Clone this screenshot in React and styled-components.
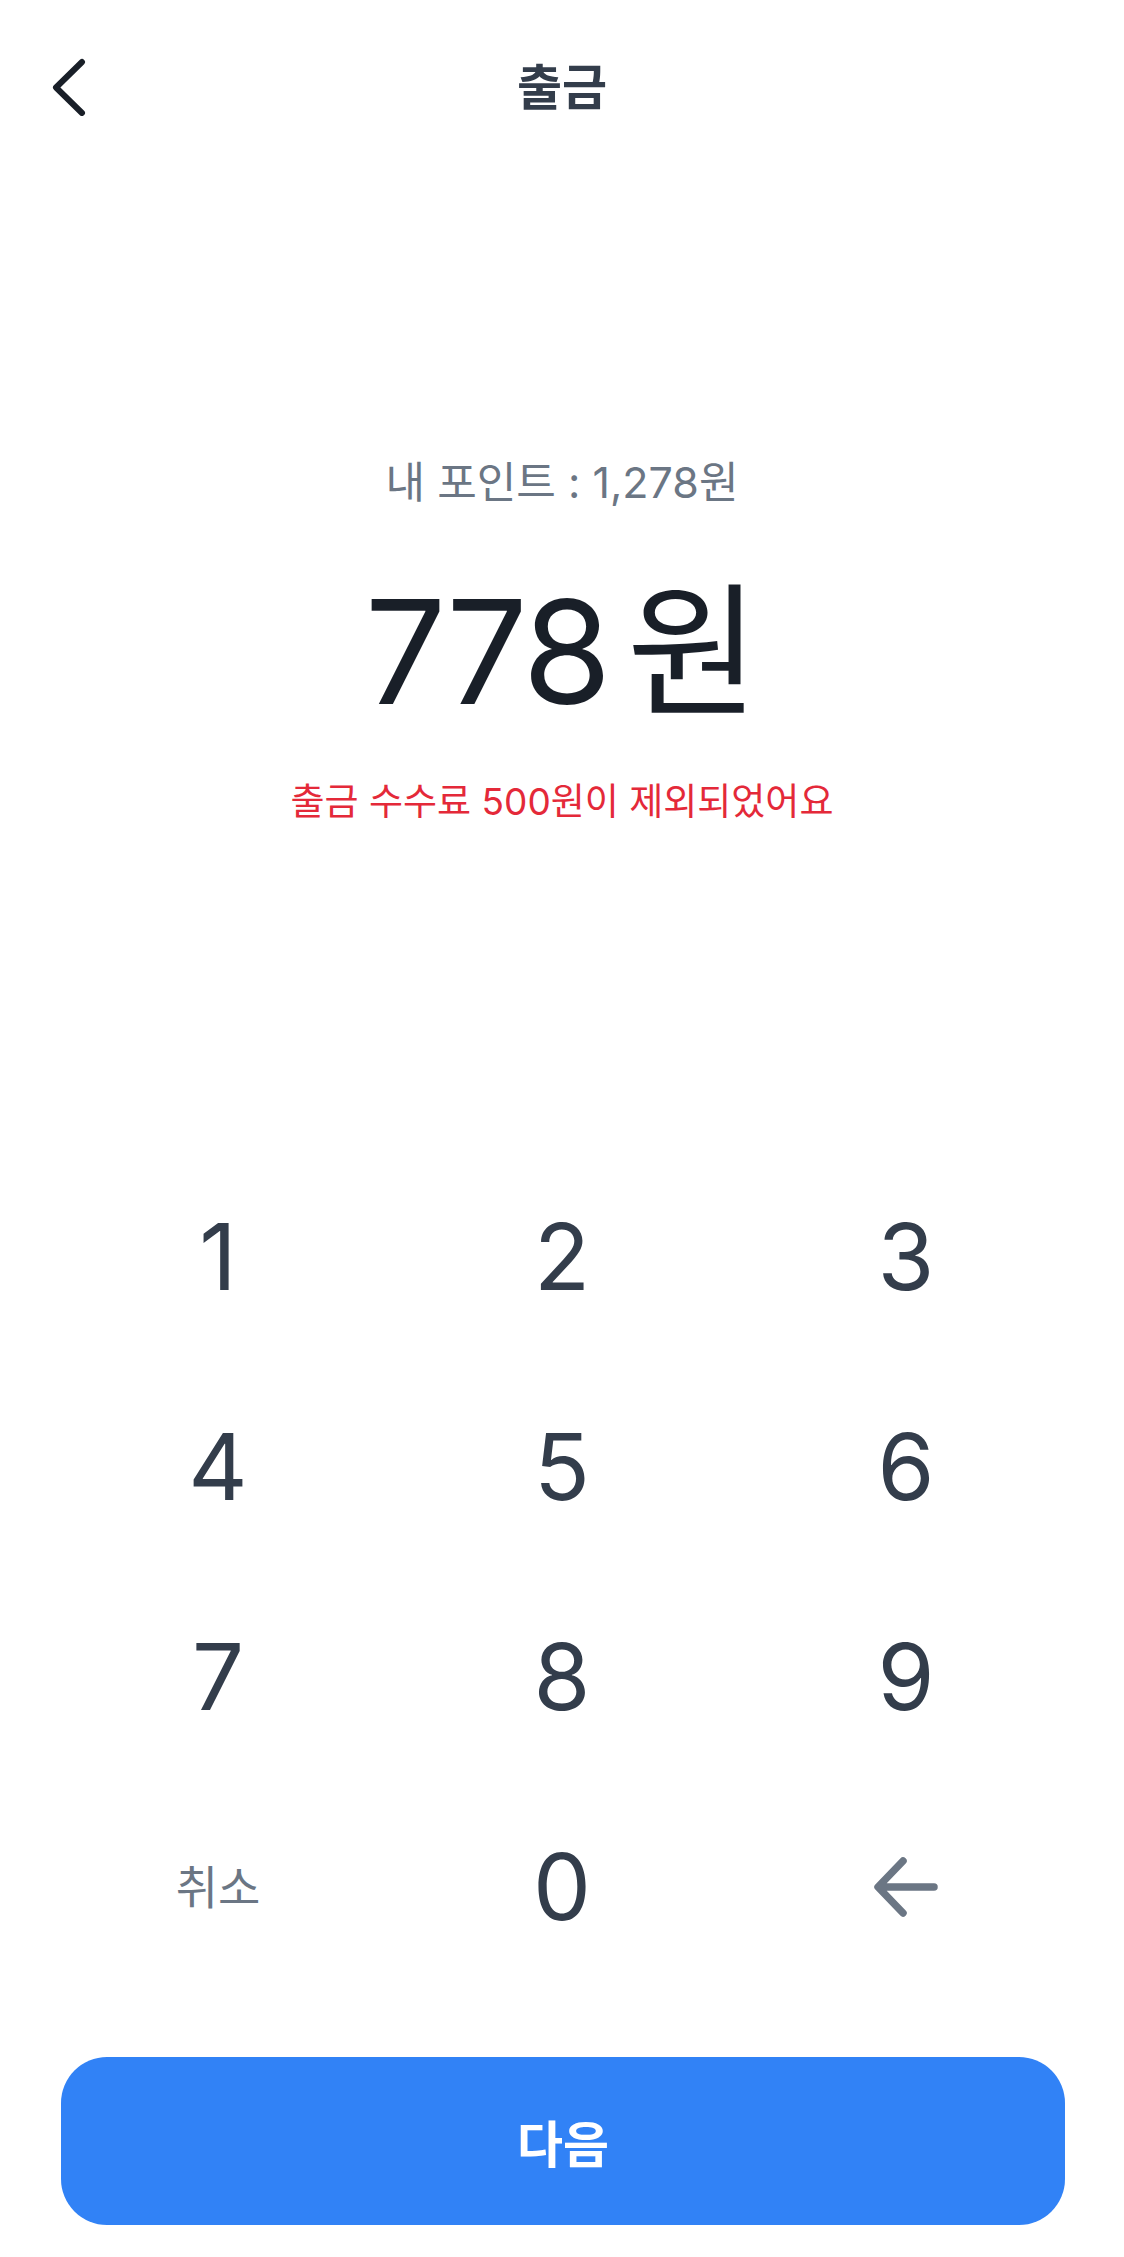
import React from 'react'
import styled, { createGlobalStyle } from 'styled-components'

const GlobalStyle = createGlobalStyle`
  * { box-sizing: border-box; }
  body {
    margin: 0;
    background: #fff;
    font-family: Inter, "Noto Sans CJK KR", sans-serif;
  }
`

const Page = styled.div`
  min-height: 100vh;
  display: flex;
  flex-direction: column;
  background: #fff;
`

const Header = styled.header`
  height: 174px;
  display: grid;
  grid-template-columns: 1fr auto 1fr;
  align-items: center;
  padding: 0 51px;
`

const BackButton = styled.button`
  justify-self: start;
  background: none;
  border: none;
  padding: 0;
  display: flex;
  cursor: pointer;
`

const Title = styled.h1`
  margin: 0;
  font-size: 49px;
  font-weight: 600;
  color: #333d4b;
  line-height: 1;
`

const Summary = styled.section`
  display: flex;
  flex-direction: column;
  align-items: center;
  padding-top: 278px;
`

const Balance = styled.p`
  margin: 0;
  font-size: 43px;
  line-height: 60px;
  color: #6b7684;
`

const Amount = styled.div`
  margin-top: 53px;
  font-size: 144px;
  line-height: 174px;
  color: #191f28;
  display: flex;
  align-items: baseline;
  letter-spacing: -3px;
`

const Unit = styled.span`
  margin-left: 18px;
  letter-spacing: 0;
`

const FeeNotice = styled.p`
  margin: 36px 0 0;
  font-size: 37px;
  line-height: 54px;
  color: #e42939;
`

const Keypad = styled.div`
  margin-top: auto;
  padding: 0 46px;
  display: grid;
  grid-template-columns: repeat(3, 1fr);
  grid-auto-rows: 210px;
`

const Key = styled.button`
  background: none;
  border: none;
  padding: 0;
  display: flex;
  align-items: center;
  justify-content: center;
  font-family: inherit;
  font-size: ${p => (p.$small ? '46px' : '92px')};
  color: ${p => (p.$small ? '#6b7684' : '#333d4b')};
  line-height: 1;
  cursor: pointer;
`

const Footer = styled.div`
  padding: 65px 59px 32px 61px;
`

const NextButton = styled.button`
  width: 100%;
  height: 168px;
  border: none;
  border-radius: 46px;
  background: #3182f6;
  color: #fff;
  font-family: inherit;
  font-size: 50px;
  font-weight: 600;
  cursor: pointer;
`

const ChevronLeft = () => (
  <svg width="36" height="58" viewBox="0 0 36 58" fill="none">
    <path d="M31 4 L5 29.5 L31 55" stroke="#191f28" strokeWidth="6" strokeLinecap="round" strokeLinejoin="round" />
  </svg>
)

const BackspaceIcon = () => (
  <svg width="68" height="60" viewBox="0 0 68 60" fill="none">
    <path d="M62 30 H7 M31 4 L6 30 L31 56" stroke="#6b7684" strokeWidth="7.5" strokeLinecap="round" strokeLinejoin="round" />
  </svg>
)

const keys = ['1', '2', '3', '4', '5', '6', '7', '8', '9']

const App = () => {
  return (
    <Page>
      <GlobalStyle />
      <Header>
        <BackButton aria-label="뒤로">
          <ChevronLeft />
        </BackButton>
        <Title>출금</Title>
        <span />
      </Header>

      <Summary>
        <Balance>내 포인트 : 1,278원</Balance>
        <Amount>
          778<Unit>원</Unit>
        </Amount>
        <FeeNotice>출금 수수료 500원이 제외되었어요</FeeNotice>
      </Summary>

      <Keypad>
        {keys.map(k => (
          <Key key={k}>{k}</Key>
        ))}
        <Key $small>취소</Key>
        <Key>0</Key>
        <Key aria-label="지우기">
          <BackspaceIcon />
        </Key>
      </Keypad>

      <Footer>
        <NextButton>다음</NextButton>
      </Footer>
    </Page>
  )
}

export default App
